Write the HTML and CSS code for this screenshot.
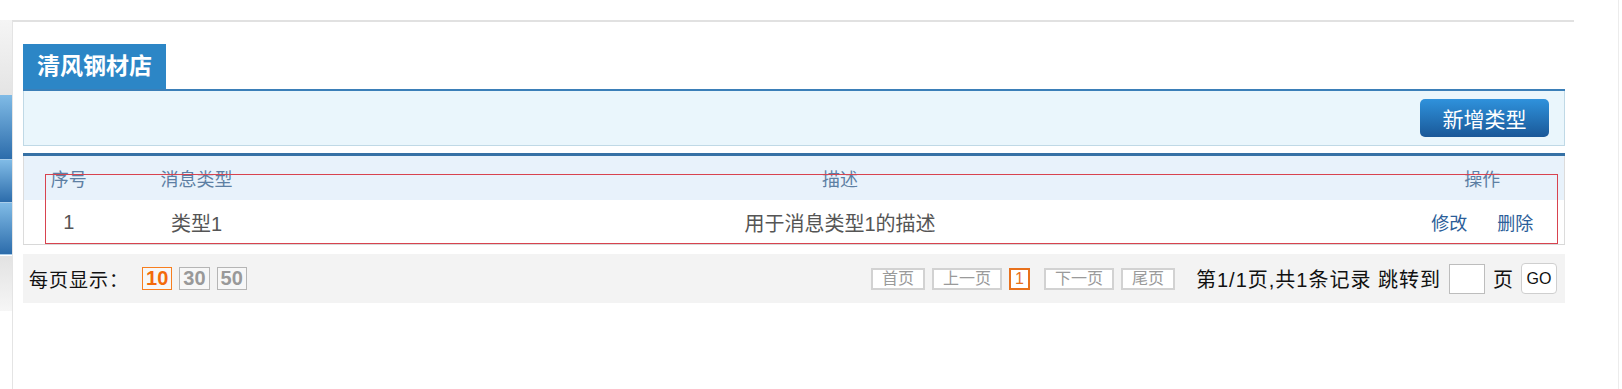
FILE: index.html
```html
<!DOCTYPE html>
<html lang="zh-CN">
<head>
    <meta charset="UTF-8">
    <title>消息类型管理</title>
    <link rel="stylesheet" href="styles.css">
</head>
<body>
    <div class="page">
        <div class="side">
            <div class="side-blank"></div>
            <div class="side-gray"></div>
            <div class="side-blue b1"></div>
            <div class="side-blue b2"></div>
            <div class="side-blue b3"></div>
            <div class="side-gray low"></div>
        </div>
        <div class="main">
            <div class="tabbar">
                <span class="tab">清风钢材店</span>
            </div>
            <div class="toolbar">
                <button class="btn-add">新增类型</button>
            </div>
            <div class="grid">
                <table class="list">
                    <colgroup>
                        <col class="c-no">
                        <col class="c-type">
                        <col>
                        <col class="c-op">
                    </colgroup>
                    <thead>
                        <tr>
                            <th>序号</th>
                            <th>消息类型</th>
                            <th>描述</th>
                            <th>操作</th>
                        </tr>
                    </thead>
                    <tbody>
                        <tr>
                            <td>1</td>
                            <td>类型1</td>
                            <td>用于消息类型1的描述</td>
                            <td class="ops"><a href="#">修改</a><a href="#">删除</a></td>
                        </tr>
                    </tbody>
                </table>
                <div class="mark"></div>
            </div>
            <div class="pager">
                <div class="sizes">
                    <span class="label">每页显示：</span>
                    <span class="size on">10</span>
                    <span class="size">30</span>
                    <span class="size">50</span>
                </div>
                <div class="nav">
                    <span class="pg">首页</span>
                    <span class="pg">上一页</span>
                    <span class="pg cur">1</span>
                    <span class="pg next">下一页</span>
                    <span class="pg">尾页</span>
                    <span class="info total">第1/1页,共1条记录 跳转到</span>
                    <input class="jump" type="text">
                    <span class="info">页</span>
                    <button class="go">GO</button>
                </div>
            </div>
        </div>
        <div class="rail"></div>
    </div>
</body>
</html>
```

FILE: styles.css
```css
body {
    margin: 0;
    background-color: #fff;
    font-family: "Liberation Sans", "Noto Sans CJK SC", sans-serif;
}
.page {
    display: flex;
    width: 1622px;
    height: 389px;
}
.side {
    width: 12px;
    display: flex;
    flex-direction: column;
}
.side-blank {
    height: 20px;
}
.side-gray {
    height: 75px;
    background: linear-gradient(#f5f5f5, #e4e4e4);
}
.side-gray.low {
    height: 55px;
    margin-top: 1px;
    background: linear-gradient(#e2e2e2, #f6f6f6);
}
.side-blue {
    background: linear-gradient(#80bbe6, #2c6cab);
    border-bottom: 1px solid #a9cdea;
}
.side-blue.b1 { height: 64px; }
.side-blue.b2 { height: 42px; }
.side-blue.b3 { height: 51px; }

.main {
    width: 1542px;
    margin-top: 20px;
    padding: 22px 9px 0 10px;
    border-top: 2px solid #e1e1e1;
    border-left: 1px solid #e4e4e4;
}
.rail {
    flex: 1;
    margin-left: 44px;
    border-left: 1px solid #ececec;
}

/* title tab */
.tabbar {
    display: flex;
    border-bottom: 2px solid #3b7fb8;
}
.tab {
    padding: 0 14px;
    height: 45px;
    line-height: 45px;
    background-color: #2c86c6;
    color: #fff;
    font-size: 23px;
    font-weight: bold;
}
.toolbar {
    display: flex;
    justify-content: flex-end;
    height: 46px;
    padding: 8px 15px 0 0;
    background-color: #eaf6fc;
    border: 1px solid #c0d9e6;
    border-top: none;
}
.btn-add {
    width: 129px;
    height: 38px;
    border: none;
    border-radius: 5px;
    background: linear-gradient(#2f92dc, #1a5898);
    color: #fff;
    font-family: inherit;
    font-size: 21px;
    cursor: pointer;
}

/* list */
.grid {
    position: relative;
    margin-top: 7px;
    border-top: 3px solid #3671a5;
}
.list {
    width: 100%;
    table-layout: fixed;
    border-collapse: collapse;
    border-left: 1px solid #dcdcdc;
    border-right: 1px solid #dcdcdc;
}
.c-no { width: 90px; }
.c-type { width: 166px; }
.c-op { width: 164px; }
.list th {
    height: 44px;
    padding: 0;
    background-color: #e8f2fb;
    color: #5d7fa3;
    font-size: 18px;
    font-weight: normal;
}
.list td {
    height: 44px;
    padding: 0;
    text-align: center;
    color: #555;
    font-size: 20px;
    border-bottom: 1px solid #d8d8d8;
}
.ops a {
    margin: 0 15px;
    color: #2b5e99;
    font-size: 18px;
    text-decoration: none;
}
.mark {
    position: absolute;
    left: 22px;
    top: 18px;
    width: 1511px;
    height: 68px;
    border: 1px solid #d8434f;
}

/* pager */
.pager {
    display: flex;
    justify-content: space-between;
    align-items: center;
    height: 49px;
    margin-top: 9px;
    padding: 0 8px 0 6px;
    background-color: #f3f3f3;
}
.sizes {
    display: flex;
    align-items: center;
    color: #111;
}
.label {
    font-size: 19px;
    letter-spacing: 1px;
}
.size {
    margin-left: 7px;
    padding: 0 3px;
    height: 21px;
    line-height: 21px;
    border: 1px solid #b5b5b5;
    background-color: #f7f7f7;
    color: #999;
    font-weight: bold;
    font-size: 20px;
}
.size.on {
    margin-left: 13px;
    border-color: #f77e1e;
    color: #f36a0a;
}
.nav {
    display: flex;
    align-items: center;
}
.pg {
    margin-left: 7px;
    padding: 0 9px;
    height: 18px;
    line-height: 18px;
    border: 2px solid #d2d2d2;
    background-color: #fff;
    color: #9a9a9a;
    font-size: 16px;
}
.pg.cur {
    padding: 0 4px;
    border-color: #e8711c;
    color: #e8711c;
}
.pg.next {
    margin-left: 14px;
}
.info {
    margin-left: 8px;
    color: #111;
    font-size: 20px;
}
.info.total {
    margin-left: 21px;
    letter-spacing: 1px;
}
.jump {
    width: 34px;
    height: 28px;
    margin-left: 8px;
    padding: 0;
    border: 1px solid #bdbdbd;
    background-color: #fff;
}
.go {
    width: 36px;
    height: 31px;
    margin-left: 8px;
    padding: 0;
    border: 1px solid #cfcfcf;
    border-radius: 4px;
    background-color: #fff;
    color: #111;
    font-family: "Liberation Sans", sans-serif;
    font-size: 16px;
}
```
